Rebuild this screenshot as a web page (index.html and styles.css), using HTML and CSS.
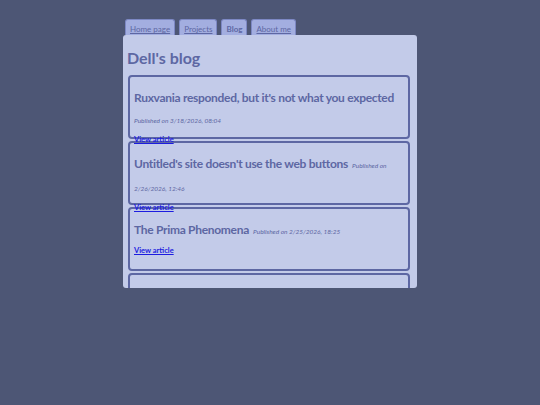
FILE: index.html
```html
<!DOCTYPE html>
<html lang="en">
<head>
    <meta charset="UTF-8">
    <title>Dell's blog</title>
    <link rel="stylesheet" href="styles.css">
</head>
<body>

<div class="wrapper">
    <!-- tabs -->
    <nav class="tabs">
        <a href="#" class="tab">Home page</a>
        <a href="#" class="tab">Projects</a>
        <a href="#" class="tab active">Blog</a>
        <a href="#" class="tab">About me</a>
    </nav>

    <!-- main panel -->
    <main class="panel">
        <h1>Dell's blog</h1>

        <div class="post">
            <span class="post-title">Ruxvania responded, but it's not what you expected</span>
            <span class="post-date">Published on 3/18/2026, 08:04</span>
            <a href="#" class="post-link">View article</a>
        </div>

        <div class="post">
            <span class="post-title">Untitled's site doesn't use the web buttons</span>
            <span class="post-date">Published on 2/26/2026, 12:46</span>
            <a href="#" class="post-link">View article</a>
        </div>

        <div class="post">
            <span class="post-title">The Prima Phenomena</span>
            <span class="post-date">Published on 2/25/2026, 18:25</span>
            <a href="#" class="post-link">View article</a>
        </div>

        <div class="post"></div>
    </main>
</div>

</body>
</html>
```

FILE: styles.css
```css
*{box-sizing:border-box}
html,body{height:100%}
body{margin:0;background:#4d5675;color:#5d67a3;font-family:Lato,"Open Sans",sans-serif;overflow:hidden}
.wrapper{width:294px;margin:0 auto;padding-top:19px}
.tabs{display:flex;gap:4px;height:16px;padding-left:2px}
.tab{display:block;height:16px;padding:3px 4px 0;background:#a3aee0;border:1px solid #7d88c4;border-bottom:none;border-radius:3px 3px 0 0;font-size:8px;line-height:12px;color:#5d67a3}
.tab.active{font-weight:bold;text-decoration:none}
.panel{height:253px;overflow:hidden;background:#c3cbe9;border-radius:3px;padding:0 7px 0 5px}
.panel h1{margin:0 0 0 -1px;padding-top:12px;height:40px;font-size:16px;line-height:21px;font-weight:bold}
.post{height:64px;margin-bottom:2px;padding:9px 4px 0 4px;border:2px solid #5d67a3;border-radius:4px;line-height:19px}
.post-title{font-size:12px;font-weight:bold;letter-spacing:-.3px}
.post-date{font-size:6.5px;font-style:italic}
.post-link{display:block;font-size:7.5px;line-height:10px;font-weight:bold;color:#1c1ce0;margin-top:5px}
```
